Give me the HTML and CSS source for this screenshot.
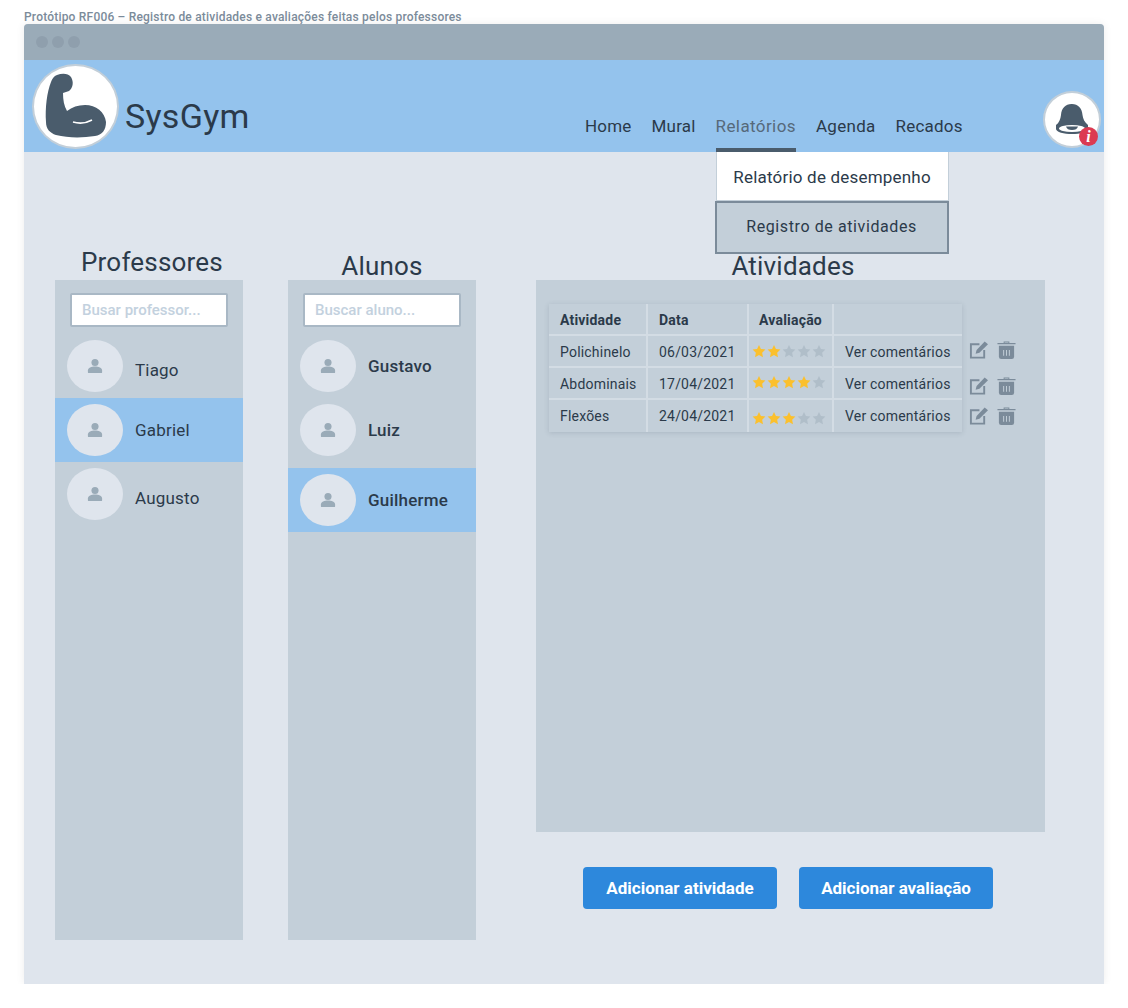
FILE: index.html
```html
<!DOCTYPE html>
<html lang="pt-BR">
<head>
    <meta charset="UTF-8">
    <meta name="viewport" content="width=device-width, initial-scale=1.0">
    <title>SysGym</title>
    <link rel="stylesheet" href="styles.css">
</head>
<body>
    <svg class="sprites" width="0" height="0">
        <symbol id="star" viewBox="0 0 24 24"><path d="M12 1.5l3.3 7 7.7 1-5.6 5.3 1.4 7.7-6.800-3.700-6.800 3.700 1.400-7.700L1 9.500l7.700-1z"/></symbol>
        <symbol id="user" viewBox="0 0 18 18"><circle cx="9" cy="5" r="4"/><path d="M1 16v-2c0-3 4-4.500 8-4.500s8 1.500 8 4.500v2q0 1-1 1H2q-1 0-1-1z"/></symbol>
        <symbol id="edit" viewBox="0 0 20 20"><path d="M11 4H2v14h14v-8" fill="none" stroke="currentColor" stroke-width="2"/><path d="M7 14l1-4 8.500-9 3.500 3-9 9z"/></symbol>
        <symbol id="trash" viewBox="0 0 20 20"><path d="M7 2.500V1h6v1.500h6.500V4H.5V2.500zM8 2.500h4V2H8z"/><path d="M2 5.500h16V17q0 2.500-2.500 2.500h-11Q2 19.500 2 17z"/><path d="M6.500 10h1v6h-1zM9.500 10h1v6h-1zM12.500 10h1v6h-1z" fill="#c3cfd9"/></symbol>
    </svg>

    <p class="caption">Protótipo RF006 – Registro de atividades e avaliações feitas pelos professores</p>

    <div class="frame">
        <div class="titlebar">
            <span class="dot"></span><span class="dot"></span><span class="dot"></span>
        </div>

        <header class="header">
            <div class="logo">
                <svg class="logo-art" viewBox="32 64 87 85" width="87" height="85">
                    <path class="muscle" d="M57 75C62 73 68 73 71 77C74 82 73 88 69 91L63 93C63 100 64 106 67 111C72 107 78 105 85 105C96 105 105 112 106 122C106 130 102 135 95 136C82 138 68 138 56 135C50 133 46 129 46 122C45 108 47 92 51 82C52 79 54 76 57 75Z"/>
                    <path d="M73 122Q83 125 92 120" fill="none" stroke="#fff" stroke-width="1.500"/>
                </svg>
            </div>
            <div class="brand">SysGym</div>
            <nav class="nav">
                <a class="nav-item">Home</a>
                <a class="nav-item">Mural</a>
                <div class="nav-item active">
                    Relatórios
                    <div class="dropdown">
                        <div class="drop-item">Relatório de desempenho</div>
                        <div class="drop-item current">Registro de atividades</div>
                    </div>
                </div>
                <a class="nav-item wide">Agenda</a>
                <a class="nav-item">Recados</a>
            </nav>
            <div class="bell">
                <svg viewBox="1052 101 40 40" width="40" height="40">
                    <path class="muscle" d="M1072 105c6 0 10 4 10.500 11 .5 4 2 7 5.500 10v4c0 3-8 5-16 5s-16-2-16-5v-4c3-2 4.500-6 5-10 .5-7 4.500-11 10.500-11z"/>
                    <ellipse cx="1072" cy="129.500" rx="13" ry="3.500" fill="#fff"/>
                    <path class="muscle" d="M1066 127.500h12q-1 3.500-6 3.500t-6-3.500z"/>
                </svg>
                <span class="badge">i</span>
            </div>
        </header>

        <main class="main">
            <section class="col col-people">
                <h2 class="col-title shifted">Professores</h2>
                <div class="panel panel-tall">
                    <div class="search"><span>Busar professor...</span></div>
                    <div class="person"><span class="avatar"><svg><use href="#user"/></svg></span><span class="name low">Tiago</span></div>
                    <div class="person selected"><span class="avatar"><svg><use href="#user"/></svg></span><span class="name">Gabriel</span></div>
                    <div class="person"><span class="avatar"><svg><use href="#user"/></svg></span><span class="name low">Augusto</span></div>
                </div>
            </section>

            <section class="col col-people col-students">
                <h2 class="col-title lower">Alunos</h2>
                <div class="panel panel-tall">
                    <div class="search"><span>Buscar aluno...</span></div>
                    <div class="person"><span class="avatar"><svg><use href="#user"/></svg></span><span class="name strong">Gustavo</span></div>
                    <div class="person"><span class="avatar"><svg><use href="#user"/></svg></span><span class="name strong">Luiz</span></div>
                    <div class="person selected apart"><span class="avatar"><svg><use href="#user"/></svg></span><span class="name strong">Guilherme</span></div>
                </div>
            </section>

            <section class="col col-activities">
                <h2 class="col-title lower">Atividades</h2>
                <div class="panel panel-activities">
                    <table class="table">
                        <colgroup><col class="c1"><col class="c2"><col class="c3"><col class="c4"></colgroup>
                        <tr><th>Atividade</th><th>Data</th><th class="center">Avaliação</th><th></th></tr>
                        <tr>
                            <td>Polichinelo</td><td>06/03/2021</td>
                            <td class="stars-cell"><span class="stars"><svg class="on"><use href="#star"/></svg><svg class="on"><use href="#star"/></svg><svg><use href="#star"/></svg><svg><use href="#star"/></svg><svg><use href="#star"/></svg></span></td>
                            <td>Ver comentários</td>
                        </tr>
                        <tr>
                            <td>Abdominais</td><td>17/04/2021</td>
                            <td class="stars-cell"><span class="stars up"><svg class="on"><use href="#star"/></svg><svg class="on"><use href="#star"/></svg><svg class="on"><use href="#star"/></svg><svg class="on"><use href="#star"/></svg><svg><use href="#star"/></svg></span></td>
                            <td>Ver comentários</td>
                        </tr>
                        <tr>
                            <td>Flexões</td><td>24/04/2021</td>
                            <td class="stars-cell"><span class="stars down"><svg class="on"><use href="#star"/></svg><svg class="on"><use href="#star"/></svg><svg class="on"><use href="#star"/></svg><svg><use href="#star"/></svg><svg><use href="#star"/></svg></span></td>
                            <td>Ver comentários</td>
                        </tr>
                    </table>
                    <div class="actions">
                        <div class="action-row"><svg class="icon-edit"><use href="#edit"/></svg><svg class="icon-trash"><use href="#trash"/></svg></div>
                        <div class="action-row second"><svg class="icon-edit"><use href="#edit"/></svg><svg class="icon-trash"><use href="#trash"/></svg></div>
                        <div class="action-row third"><svg class="icon-edit"><use href="#edit"/></svg><svg class="icon-trash"><use href="#trash"/></svg></div>
                    </div>
                </div>
                <div class="buttons">
                    <button class="btn">Adicionar atividade</button>
                    <button class="btn">Adicionar avaliação</button>
                </div>
            </section>
        </main>
    </div>
</body>
</html>
```

FILE: styles.css
```css
body {
    margin: 0;
    padding: 0 24px;
    background-color: #ffffff;
    font-family: Roboto, "Liberation Sans", sans-serif;
    color: #2b3a4a;
}
.sprites {
    position: absolute;
}
.caption {
    margin: 0;
    height: 24px;
    padding-top: 10px;
    box-sizing: border-box;
    font-size: 12px;
    line-height: 14px;
    font-weight: 500;
    letter-spacing: 0.2px;
    color: #7b8b9a;
    white-space: nowrap;
}
.frame {
    width: 1080px;
    height: 960px;
    background-color: #dfe5ed;
    border-radius: 4px 4px 0 0;
    box-shadow: 0 0 8px rgba(0, 0, 0, 0.08);
}
.titlebar {
    display: flex;
    align-items: center;
    gap: 4px;
    height: 36px;
    padding-left: 12px;
    background-color: #9aabb8;
    border-radius: 4px 4px 0 0;
}
.dot {
    width: 12px;
    height: 12px;
    border-radius: 50%;
    background-color: #8f9fad;
}

/* header */
.header {
    display: flex;
    height: 92px;
    background-color: #94c3ed;
}
.logo {
    display: flex;
    align-items: center;
    justify-content: center;
    box-sizing: border-box;
    width: 87px;
    height: 85px;
    margin: 4px 0 0 8px;
    background-color: #ffffff;
    border: 2px solid #c3cfd9;
    border-radius: 50%;
}
.logo-art {
    flex-shrink: 0;
}
.muscle {
    fill: #4a5c6c;
}
.brand {
    margin: 36px 0 0 6px;
    width: 460px;
    font-size: 34px;
    line-height: 40px;
    letter-spacing: 0.3px;
}
.nav {
    display: flex;
    gap: 20px;
    height: 92px;
}
.nav-item {
    position: relative;
    box-sizing: border-box;
    height: 92px;
    padding-top: 56px;
    font-size: 17px;
    line-height: 20px;
    letter-spacing: 0.2px;
    white-space: nowrap;
}
.nav-item.active {
    color: #56697a;
    border-bottom: 4px solid #4a5c6c;
    letter-spacing: 0.4px;
}
.nav-item.wide {
    letter-spacing: 0.3px;
}
.dropdown {
    position: absolute;
    top: 92px;
    left: 0;
    width: 233px;
    color: #2b3a4a;
    letter-spacing: 0;
}
.drop-item {
    box-sizing: border-box;
    height: 49px;
    background-color: #ffffff;
    border: 1px solid #c3cfd9;
    border-top: none;
    text-align: center;
    font-size: 17px;
    line-height: 50px;
    letter-spacing: 0.2px;
}
.drop-item.current {
    height: 53px;
    margin-left: -1px;
    background-color: #c3cfd9;
    border: 2px solid #7b8b9a;
    line-height: 48px;
    font-size: 16px;
    letter-spacing: 0.6px;
}
.bell {
    position: relative;
    display: flex;
    align-items: center;
    justify-content: center;
    box-sizing: border-box;
    width: 58px;
    height: 57px;
    margin: 31px 3px 0 auto;
    background-color: #ffffff;
    border: 2px solid #c3cfd9;
    border-radius: 50%;
}
.bell svg {
    flex-shrink: 0;
}
.badge {
    position: absolute;
    right: 1px;
    bottom: 0;
    width: 19px;
    height: 19px;
    border-radius: 50%;
    background-color: #dc3a52;
    color: #ffffff;
    font-family: "Liberation Serif", serif;
    font-size: 16px;
    font-style: italic;
    font-weight: bold;
    line-height: 19px;
    text-align: center;
}

/* columns */
.main {
    display: flex;
    padding: 96px 0 0 31px;
}
.col-people {
    width: 188px;
    margin-right: 45px;
}
.col-students {
    margin-right: 60px;
}
.col-activities {
    width: 509px;
}
.col-title {
    height: 32px;
    margin: 0;
    font-size: 26px;
    font-weight: 400;
    line-height: 28px;
    letter-spacing: 0.2px;
    text-align: center;
}
.col-title.lower {
    line-height: 36px;
}
.col-title.shifted {
    padding-left: 6px;
}
.col-activities .col-title {
    padding-left: 5px;
}
.panel {
    background-color: #c3cfd9;
}
.panel-tall {
    height: 660px;
    padding-top: 13px;
    box-sizing: border-box;
}
.search {
    box-sizing: border-box;
    width: 158px;
    height: 34px;
    margin: 0 0 7px 15px;
    padding-left: 10px;
    background-color: #ffffff;
    border: 2px solid #a9b8c5;
    border-radius: 2px;
    font-size: 15px;
    font-weight: 500;
    line-height: 30px;
    color: #c3d1de;
}
.person {
    display: flex;
    align-items: center;
    gap: 12px;
    height: 64px;
    padding-left: 12px;
}
.person.selected {
    background-color: #94c3ed;
}
.person.apart {
    margin-top: 6px;
}
.avatar {
    display: flex;
    align-items: center;
    justify-content: center;
    width: 56px;
    height: 52px;
    border-radius: 50%;
    background-color: #dfe5ed;
}
.avatar svg {
    width: 16px;
    height: 18px;
    fill: #9aabb8;
}
.name {
    font-size: 17px;
    letter-spacing: 0.2px;
}
.name.low {
    margin-top: 8px;
}
.name.strong {
    font-weight: 500;
}

/* activities */
.panel-activities {
    display: flex;
    align-items: flex-start;
    box-sizing: border-box;
    height: 552px;
    padding: 24px 0 0 13px;
}
.table {
    width: 413px;
    border-spacing: 0;
    table-layout: fixed;
    box-shadow: 0 1px 5px rgba(74, 92, 108, 0.2);
    font-size: 14px;
    letter-spacing: 0.2px;
}
.c1 { width: 99px; }
.c2 { width: 101px; }
.c3 { width: 85px; }
.table th, .table td {
    box-sizing: border-box;
    height: 32px;
    padding: 2px 0 0 11px;
    border-right: 2px solid #d3dce4;
    border-bottom: 2px solid #d3dce4;
    text-align: left;
    white-space: nowrap;
}
.table th {
    font-weight: 700;
}
.table th.center {
    text-align: center;
    padding-left: 0;
}
.table th:last-child, .table td:last-child {
    border-right: none;
}
.table tr:last-child td {
    border-bottom: none;
    padding-top: 0;
}
.table td.stars-cell {
    padding: 0 0 0 3px;
}
.stars {
    display: flex;
    gap: 1px;
}
.stars.up {
    margin-bottom: 3px;
}
.stars.down {
    margin-top: 4px;
}
.stars svg {
    width: 14px;
    height: 14px;
    fill: #b0bec9;
}
.stars svg.on {
    fill: #fbc02d;
}
.actions {
    padding: 36px 0 0 7px;
}
.action-row {
    display: flex;
    gap: 9px;
    height: 20px;
    color: #7b8b9a;
}
.action-row.second {
    margin-top: 16px;
}
.action-row.third {
    margin-top: 10px;
}
.icon-edit, .icon-trash {
    width: 19px;
    height: 20px;
    fill: #7b8b9a;
}
.buttons {
    display: flex;
    gap: 22px;
    margin-top: 35px;
    padding-left: 47px;
}
.btn {
    width: 194px;
    height: 42px;
    border: none;
    border-radius: 4px;
    background-color: #2d88dc;
    color: #ffffff;
    font-family: inherit;
    font-size: 17px;
    font-weight: 700;
}
```
